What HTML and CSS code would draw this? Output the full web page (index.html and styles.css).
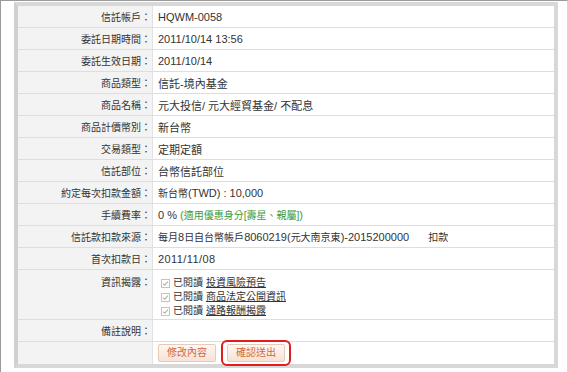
FILE: index.html
```html
<!DOCTYPE html>
<html lang="zh-Hant">
<head>
  <meta charset="UTF-8">
  <title>定期定額申購確認</title>
  <link rel="stylesheet" href="styles.css">
</head>
<body>
  <div class="frame">
    <table class="confirm-table">
      <tr>
        <th>信託帳戶：</th>
        <td>HQWM-0058</td>
      </tr>
      <tr>
        <th>委託日期時間：</th>
        <td>2011/10/14 13:56</td>
      </tr>
      <tr>
        <th>委託生效日期：</th>
        <td>2011/10/14</td>
      </tr>
      <tr>
        <th>商品類型：</th>
        <td class="cjk">信託-境內基金</td>
      </tr>
      <tr>
        <th>商品名稱：</th>
        <td class="cjk">元大投信/ 元大經貿基金/ 不配息</td>
      </tr>
      <tr>
        <th>商品計價幣別：</th>
        <td class="cjk">新台幣</td>
      </tr>
      <tr>
        <th>交易類型：</th>
        <td class="cjk">定期定額</td>
      </tr>
      <tr>
        <th>信託部位：</th>
        <td class="cjk">台幣信託部位</td>
      </tr>
      <tr>
        <th>約定每次扣款金額：</th>
        <td><span class="cjk">新台幣</span>(TWD) : 10,000</td>
      </tr>
      <tr>
        <th>手續費率：</th>
        <td>0 % <span class="note">(<span class="cjk">適用優惠身分[壽星、親屬]</span>)</span></td>
      </tr>
      <tr>
        <th>信託款扣款來源：</th>
        <td><span class="cjk">每月</span>8<span class="cjk">日自台幣帳戶</span>8060219(<span class="cjk">元大南京東</span>)-2015200000<span class="cjk debit">扣款</span></td>
      </tr>
      <tr>
        <th>首次扣款日：</th>
        <td class="first-date">2011/11/08</td>
      </tr>
      <tr class="tall">
        <th>資訊揭露：</th>
        <td>
          <ul class="read-list">
            <li><span class="tick"><svg width="9" height="9" viewBox="0 0 9 9"><rect x="0.5" y="0.5" width="8" height="8" fill="#fff" stroke="#c4c4c4"/><path d="M2 4.6 L3.7 6.2 L7 2.6" fill="none" stroke="#a8b8a8" stroke-width="1.1"/></svg></span>已閱讀 <a href="#">投資風險預告</a></li>
            <li><span class="tick"><svg width="9" height="9" viewBox="0 0 9 9"><rect x="0.5" y="0.5" width="8" height="8" fill="#fff" stroke="#c4c4c4"/><path d="M2 4.6 L3.7 6.2 L7 2.6" fill="none" stroke="#a8b8a8" stroke-width="1.1"/></svg></span>已閱讀 <a href="#">商品法定公開資訊</a></li>
            <li><span class="tick"><svg width="9" height="9" viewBox="0 0 9 9"><rect x="0.5" y="0.5" width="8" height="8" fill="#fff" stroke="#c4c4c4"/><path d="M2 4.6 L3.7 6.2 L7 2.6" fill="none" stroke="#a8b8a8" stroke-width="1.1"/></svg></span>已閱讀 <a href="#">通路報酬揭露</a></li>
          </ul>
        </td>
      </tr>
      <tr>
        <th>備註說明：</th>
        <td></td>
      </tr>
      <tr class="last">
        <th></th>
        <td>
          <div class="btn-row">
            <button class="btn">修改內容</button>
            <span class="highlight"><button class="btn">確認送出</button></span>
          </div>
        </td>
      </tr>
    </table>
  </div>
</body>
</html>
```

FILE: styles.css
```css
body {
  margin: 0;
  padding: 0;
  background: #fff;
  font-family: "Liberation Sans", "Noto Sans CJK TC", sans-serif;
}

.frame {
  width: 568px;
  height: 372px;
  box-sizing: border-box;
  border-top: 1px solid #9a9a9a;
  border-left: 1px solid #9a9a9a;
  border-right: 1px solid #d6d6d6;
  padding: 1px 8px 0 13px;
  overflow: hidden;
}

.confirm-table {
  width: 544px;
  border-collapse: separate;
  border-spacing: 0;
  border: 4px solid #d8d8d8;
  border-left-color: #d0d0d0;
}

.confirm-table th,
.confirm-table td {
  height: 21px;
  padding: 0;
  border-bottom: 1px solid #dedede;
  color: #333;
  vertical-align: middle;
}

.confirm-table tr.last th,
.confirm-table tr.last td {
  border-bottom: none;
  height: 22px;
}

.confirm-table th {
  width: 133px;
  background: #f3f3f3;
  border-right: 1px solid #e2e2e2;
  text-align: right;
  font-weight: normal;
  font-size: 10px;
  padding-right: 1px;
}

.confirm-table td {
  font-size: 11px;
  padding-left: 5px;
  white-space: nowrap;
}

.cjk {
  font-size: 10px;
}

.note {
  color: #3c9a3c;
}

.debit {
  margin-left: 19px;
}

.first-date {
  letter-spacing: 0.4px;
}

.tall th,
.tall td {
  height: 50px;
  vertical-align: top;
  padding-top: 6px;
  box-sizing: border-box;
}

.tall th {
  line-height: 14px;
}

.read-list {
  list-style: none;
  margin: 0;
  padding: 0 0 0 3px;
  font-size: 10px;
  line-height: 14px;
}

.read-list li {
  display: flex;
  align-items: center;
}

.tick {
  display: inline-flex;
  width: 9px;
  height: 9px;
  margin-right: 3px;
}

.read-list a {
  color: #333;
  text-decoration: underline;
  margin-left: 3px;
}

.btn-row {
  display: flex;
  align-items: center;
  height: 22px;
  gap: 6px;
}

.btn {
  font-family: "Liberation Sans", "Noto Sans CJK TC", sans-serif;
  font-size: 10px;
  color: #d2683a;
  height: 18px;
  padding: 0 8px;
  line-height: 16px;
  background: linear-gradient(#fff7f2, #f6e2d6);
  border: 1px solid #e6cbbb;
  border-radius: 2px;
  cursor: pointer;
}

.highlight {
  display: flex;
  align-items: center;
  position: relative;
  margin: -3px 0 -3px -1px;
  padding: 2px 4px;
  border: 2px solid #e11d1d;
  border-radius: 6px;
}
```
